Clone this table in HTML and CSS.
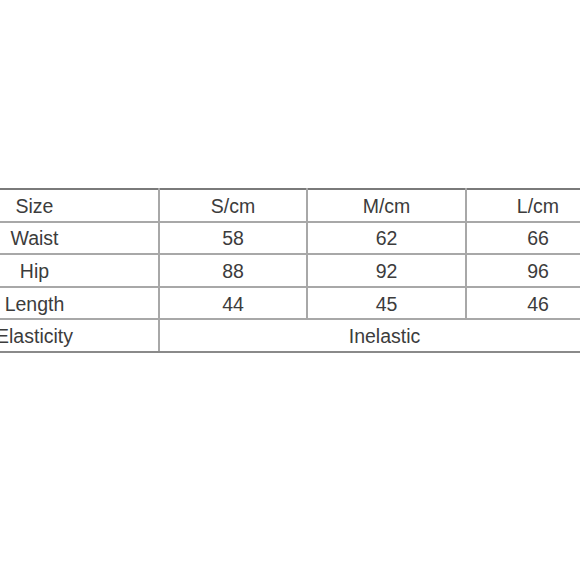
FILE: index.html
```html
<!DOCTYPE html>
<html>
<head>
<meta charset="utf-8">
<link rel="stylesheet" href="styles.css">
</head>
<body>
<div class="page">
  <table class="size-table">
    <colgroup>
      <col class="c-label">
      <col class="c-s">
      <col class="c-m">
      <col class="c-l">
    </colgroup>
    <tr><td>Size</td><td>S/cm</td><td>M/cm</td><td>L/cm</td></tr>
    <tr><td>Waist</td><td>58</td><td>62</td><td>66</td></tr>
    <tr><td>Hip</td><td>88</td><td>92</td><td>96</td></tr>
    <tr><td>Length</td><td>44</td><td>45</td><td>46</td></tr>
    <tr><td>Elasticity</td><td colspan="3">Inelastic</td></tr>
  </table>
</div>
</body>
</html>
```
FILE: styles.css
```css
html, body {
  margin: 0;
  padding: 0;
  background: #ffffff;
}
.page {
  width: 580px;
  height: 580px;
  overflow: hidden;
  padding-top: 188px;
  box-sizing: border-box;
}
.size-table {
  margin-left: -89px;
  border-collapse: collapse;
  table-layout: fixed;
  width: 699px;
  font-family: "Liberation Sans", Arial, sans-serif;
  font-size: 19.5px;
  color: #3c3c3c;
  border-top: 2px solid #7a7a7a;
  border-bottom: 2px solid #8a8a8a;
}
.c-label { width: 248px; }
.c-s { width: 148px; }
.c-m { width: 159px; }
.c-l { width: 144px; }
.size-table td {
  height: 29.6px;
  padding: 1px 0 0;
  text-align: center;
  vertical-align: middle;
  border-right: 2px solid #a8a8a8;
  border-bottom: 2px solid #a8a8a8;
  line-height: 20px;
}
.size-table tr:last-child td {
  border-bottom: 2px solid #8a8a8a;
}
```
